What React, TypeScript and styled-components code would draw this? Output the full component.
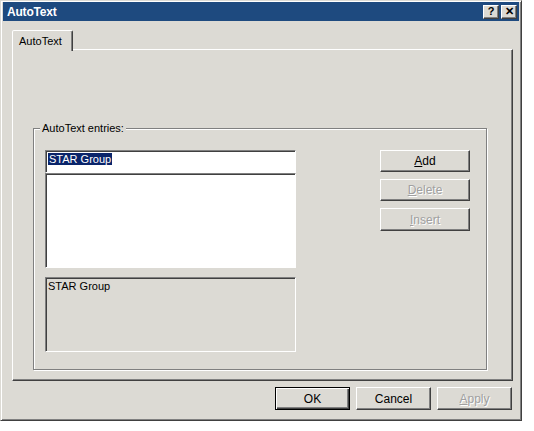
import React from "react";
import styled, { createGlobalStyle } from "styled-components";

const FACE = "#dcdad4";
const SHADOW = "#808080";
const DARK = "#404040";

const GlobalStyle = createGlobalStyle`
  html, body {
    margin: 0;
    padding: 0;
    background: #ffffff;
  }
  body {
    font-family: "Liberation Sans", Arial, sans-serif;
    font-size: 11px;
    color: #000;
  }
`;

const Window = styled.div`
  box-sizing: border-box;
  width: 522px;
  height: 421px;
  background: ${FACE};
  border: 1px solid;
  border-color: ${FACE} ${DARK} ${DARK} ${FACE};
  box-shadow: inset 1px 1px 0 #ffffff, inset -1px -1px 0 ${SHADOW};
  padding: 2px;
  display: flex;
  flex-direction: column;
`;

const TitleBar = styled.div`
  height: 19px;
  margin-top: -1px;
  background: #1e4a7f;
  display: flex;
  align-items: center;
  padding: 0 2px 0 4px;
`;

const Title = styled.span`
  flex: 1;
  color: #ffffff;
  font-weight: bold;
  font-size: 12px;
  letter-spacing: -0.2px;
`;

const CaptionButton = styled.div`
  box-sizing: border-box;
  width: 16px;
  height: 14px;
  margin-left: 2px;
  background: ${FACE};
  border: 1px solid;
  border-color: #ffffff ${DARK} ${DARK} #ffffff;
  box-shadow: inset -1px -1px 0 ${SHADOW};
  display: flex;
  align-items: center;
  justify-content: center;
  font-weight: bold;
  font-size: 11px;
  line-height: 1;
`;

const Body = styled.div`
  flex: 1;
  display: flex;
  flex-direction: column;
  padding: 8px 7px 0 9px;
`;

const TabStrip = styled.div`
  display: flex;
  height: 20px;
  margin-top: 1px;
`;

const Tab = styled.div`
  position: relative;
  z-index: 1;
  box-sizing: border-box;
  height: 21px;
  padding: 0 10px 0 6px;
  background: ${FACE};
  border: 1px solid;
  border-bottom: none;
  border-color: #ffffff ${DARK} transparent #ffffff;
  border-radius: 2px 2px 0 0;
  box-shadow: inset -1px 0 0 ${SHADOW};
  display: flex;
  align-items: center;
`;

const TabPanel = styled.div`
  box-sizing: border-box;
  width: 501px;
  height: 332px;
  margin-top: -1px;
  border: 1px solid;
  border-color: #ffffff ${DARK} ${DARK} #ffffff;
  box-shadow: inset -1px -1px 0 ${SHADOW};
  padding: 78px 0 0 20px;
`;

const GroupBox = styled.div`
  position: relative;
  box-sizing: border-box;
  width: 454px;
  height: 242px;
  border: 1px solid ${SHADOW};
  box-shadow: inset 1px 1px 0 #ffffff, 1px 1px 0 #ffffff;
  padding: 21px 0 0 11px;
  display: flex;
`;

const Legend = styled.span`
  position: absolute;
  top: -7px;
  left: 6px;
  padding: 0 2px;
  background: ${FACE};
`;

const LeftColumn = styled.div`
  width: 251px;
  display: flex;
  flex-direction: column;
`;

const Sunken = styled.div<{ $bg: string; $h: number; $gap?: number }>`
  box-sizing: border-box;
  height: ${(p) => p.$h}px;
  margin-top: ${(p) => p.$gap ?? 0}px;
  background: ${(p) => p.$bg};
  border: 1px solid;
  border-color: ${SHADOW} #ffffff #ffffff ${SHADOW};
  box-shadow: inset 1px 1px 0 ${DARK};
  padding: 2px 2px;
`;

const Selected = styled.span`
  background: #0a246a;
  color: #ffffff;
  padding: 0 1px;
`;

const RightColumn = styled.div`
  margin-left: 84px;
  display: flex;
  flex-direction: column;
  gap: 7px;
`;

const Button = styled.div<{ $w: number; $h?: number; $disabled?: boolean; $default?: boolean }>`
  box-sizing: border-box;
  width: ${(p) => p.$w}px;
  height: ${(p) => p.$h ?? 23}px;
  background: ${FACE};
  border: 1px solid;
  border-color: ${(p) => (p.$default ? "#000000" : `#ffffff ${DARK} ${DARK} #ffffff`)};
  box-shadow: ${(p) =>
    p.$default
      ? `inset 1px 1px 0 #ffffff, inset -1px -1px 0 ${DARK}, inset -2px -2px 0 ${SHADOW}`
      : `inset -1px -1px 0 ${SHADOW}`};
  display: flex;
  align-items: center;
  justify-content: center;
  color: ${(p) => (p.$disabled ? "#a0a0a0" : "#000000")};
  text-shadow: ${(p) => (p.$disabled ? "1px 1px 0 #ffffff" : "none")};
  font-size: 12px;
`;

const Footer = styled.div`
  display: flex;
  justify-content: flex-end;
  gap: 6px;
  margin-top: 6px;
`;

export default function App() {
  return (
    <>
      <GlobalStyle />
      <Window>
        <TitleBar>
          <Title>AutoText</Title>
          <CaptionButton>?</CaptionButton>
          <CaptionButton>✕</CaptionButton>
        </TitleBar>
        <Body>
          <TabStrip>
            <Tab>AutoText</Tab>
          </TabStrip>
          <TabPanel>
            <GroupBox>
              <Legend>AutoText entries:</Legend>
              <LeftColumn>
                <Sunken $bg="#ffffff" $h={23}>
                  <Selected>STAR Group</Selected>
                </Sunken>
                <Sunken $bg="#ffffff" $h={95} />
                <Sunken $bg={FACE} $h={75} $gap={9}>
                  STAR Group
                </Sunken>
              </LeftColumn>
              <RightColumn>
                <Button $w={90} $h={22}>
                  <u>A</u>dd
                </Button>
                <Button $w={90} $h={22} $disabled>
                  <u>D</u>elete
                </Button>
                <Button $w={90} $h={23} $disabled>
                  <u>I</u>nsert
                </Button>
              </RightColumn>
            </GroupBox>
          </TabPanel>
          <Footer>
            <Button $w={75} $default>
              OK
            </Button>
            <Button $w={75}>Cancel</Button>
            <Button $w={75} $disabled>
              <u>A</u>pply
            </Button>
          </Footer>
        </Body>
      </Window>
    </>
  );
}
